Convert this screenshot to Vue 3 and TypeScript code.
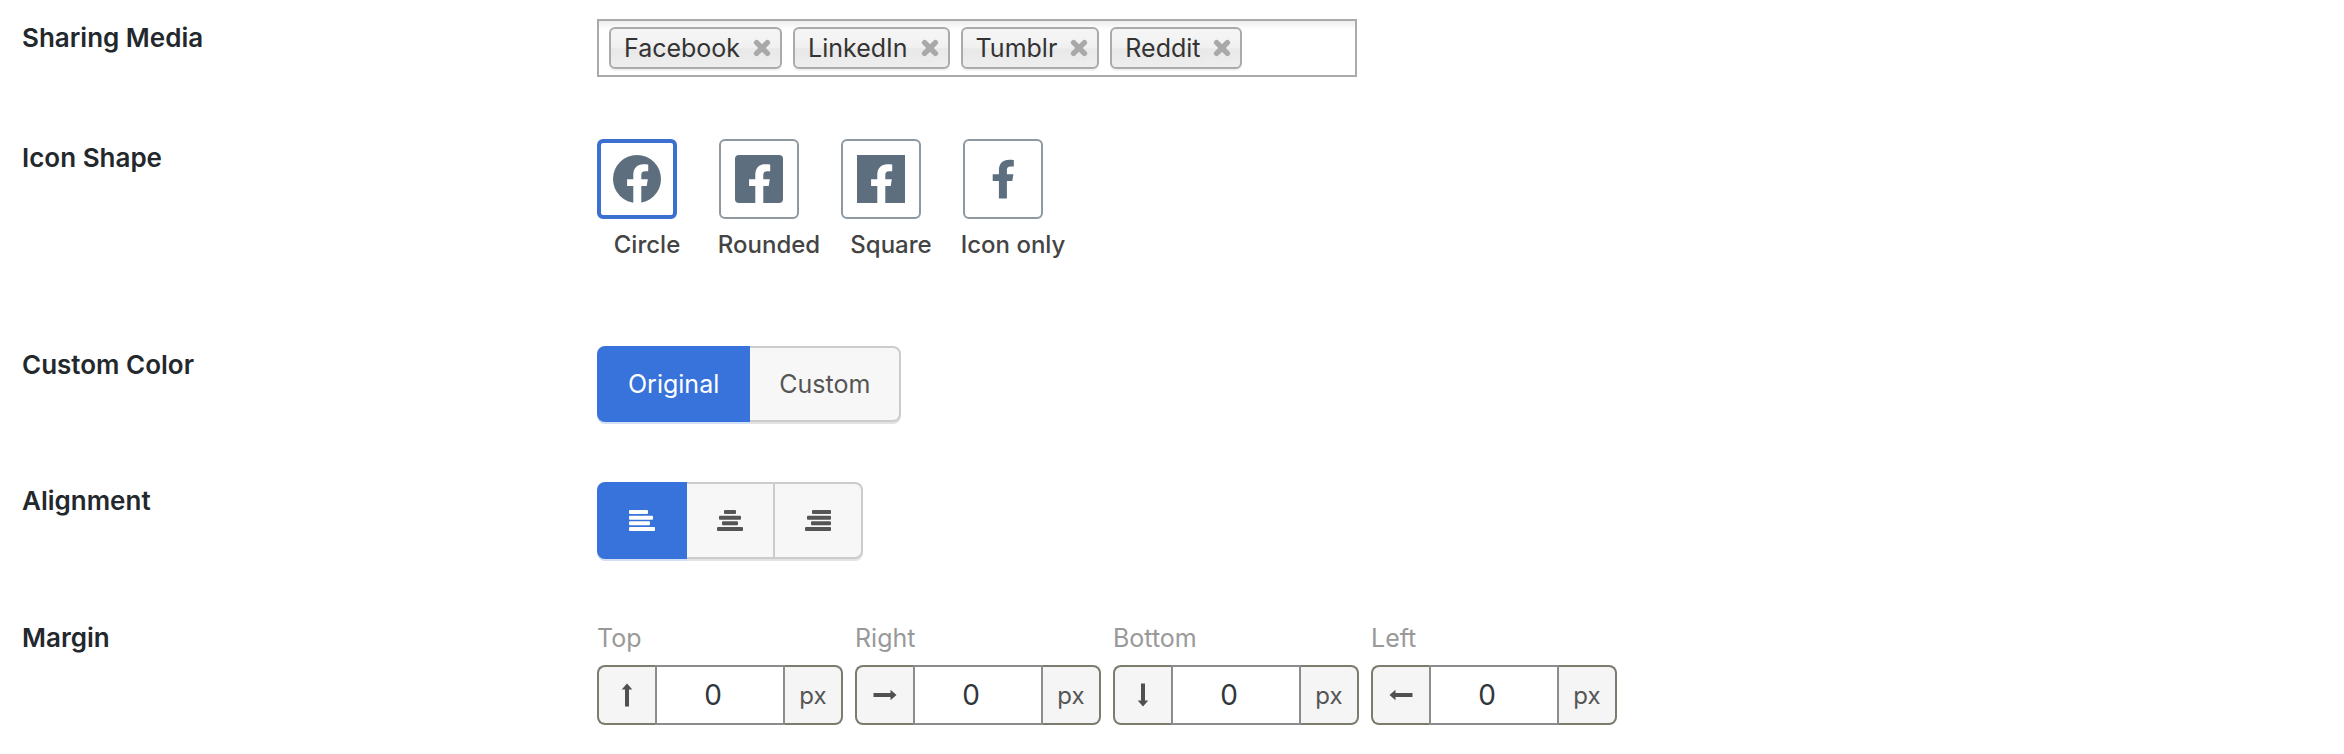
<script setup lang="ts">
import { ref } from 'vue'

type Bar = { x: number; w: number }

const media = ref<string[]>(['Facebook', 'LinkedIn', 'Tumblr', 'Reddit'])
const query = ref('')

const shapes = [
  { id: 'circle', label: 'Circle' },
  { id: 'rounded', label: 'Rounded' },
  { id: 'square', label: 'Square' },
  { id: 'icon', label: 'Icon only' },
]
const shape = ref('circle')

const colors = ['Original', 'Custom']
const color = ref('Original')

const alignments: { id: string; bars: Bar[] }[] = [
  { id: 'Left', bars: [{ x: 0, w: 19 }, { x: 0, w: 24 }, { x: 0, w: 21 }, { x: 0, w: 26 }] },
  { id: 'Center', bars: [{ x: 7, w: 12 }, { x: 2, w: 22 }, { x: 5, w: 16 }, { x: 0, w: 26 }] },
  { id: 'Right', bars: [{ x: 7, w: 19 }, { x: 2, w: 24 }, { x: 6, w: 20 }, { x: 0, w: 26 }] },
]
const alignment = ref('Left')

const margins = ref([
  { side: 'Top', angle: 0, value: '0' },
  { side: 'Right', angle: 90, value: '0' },
  { side: 'Bottom', angle: 180, value: '0' },
  { side: 'Left', angle: 270, value: '0' },
])

function removeMedia(name: string) {
  media.value = media.value.filter((m) => m !== name)
}
</script>

<template>
  <main class="settings">
    <section class="row">
      <label class="title" for="media-search">Sharing Media</label>
      <div class="chips">
        <span v-for="name in media" :key="name" class="chip">
          {{ name }}
          <button type="button" class="remove" :aria-label="`Remove ${name}`" @click="removeMedia(name)">
            <svg width="18" height="18" viewBox="0 0 18 18">
              <path d="M3.6 3.6L14.4 14.4M14.4 3.6L3.6 14.4" stroke="currentColor" stroke-width="5.4" stroke-linecap="round" />
            </svg>
          </button>
        </span>
        <input id="media-search" v-model="query" class="search" type="text" autocomplete="off" />
      </div>
    </section>

    <section class="row">
      <h2 id="shape-title" class="title">Icon Shape</h2>
      <div class="shapes" role="radiogroup" aria-labelledby="shape-title">
        <label v-for="s in shapes" :key="s.id" class="shape">
          <span class="tile">
            <input v-model="shape" type="radio" name="shape" :value="s.id" />
            <svg width="48" height="48" viewBox="0 0 48 48">
              <template v-if="s.id === 'icon'">
                <path fill="#5d6f7e" d="M19.9 43.4V26H13.7V19.2H19.9V15.4C19.9 8 24.2 4.7 30 4.7C32 4.7 34 4.9 34.8 5V11.6H31.8C28.8 11.6 27.9 13 27.9 15.2V19.2H34.4L33.3 26H27.9V43.4Z" />
              </template>
              <template v-else>
                <circle v-if="s.id === 'circle'" cx="24" cy="24" r="24" fill="#5d6f7e" />
                <rect v-else width="48" height="48" :rx="s.id === 'rounded' ? 4 : 0" fill="#5d6f7e" />
                <path fill="#fff" d="M20.3 48V31.1H14.1V24.3H20.3V20.2C20.3 12.8 24.5 9.3 30.4 9.3C32.4 9.3 34.4 9.5 35.2 9.6V16.2H32.2C29.2 16.2 28.3 17.8 28.3 20V24.3H34.8L33.7 31.1H28.3V48Z" />
              </template>
            </svg>
          </span>
          <span class="caption">{{ s.label }}</span>
        </label>
      </div>
    </section>

    <section class="row">
      <h2 id="color-title" class="title">Custom Color</h2>
      <div class="group" role="group" aria-labelledby="color-title">
        <button
          v-for="c in colors"
          :key="c"
          type="button"
          class="option"
          :class="{ active: color === c }"
          :aria-pressed="color === c"
          @click="color = c"
        >{{ c }}</button>
      </div>
    </section>

    <section class="row">
      <h2 id="align-title" class="title">Alignment</h2>
      <div class="group" role="group" aria-labelledby="align-title">
        <button
          v-for="a in alignments"
          :key="a.id"
          type="button"
          class="option icon"
          :class="{ active: alignment === a.id }"
          :aria-pressed="alignment === a.id"
          :aria-label="a.id"
          @click="alignment = a.id"
        >
          <svg width="26" height="21" viewBox="0 0 26 21" fill="currentColor">
            <rect v-for="(b, i) in a.bars" :key="i" :x="b.x" :y="i * 5.67" :width="b.w" height="4" rx="1" />
          </svg>
        </button>
      </div>
    </section>

    <section class="row">
      <h2 class="title">Margin</h2>
      <div class="margins">
        <div v-for="m in margins" :key="m.side" class="margin">
          <label class="side" :for="`margin-${m.side}`">{{ m.side }}</label>
          <div class="field">
            <span class="addon">
              <svg width="24" height="24" viewBox="0 0 24 24">
                <path :transform="`rotate(${m.angle} 12 12)`" fill="#50514f" d="M12 0.5L17.3 6.5H14V23.5H10V6.5H6.7Z" />
              </svg>
            </span>
            <input :id="`margin-${m.side}`" v-model="m.value" class="number" type="text" inputmode="numeric" />
            <span class="addon unit">px</span>
          </div>
        </div>
      </div>
    </section>
  </main>
</template>

<style>
body {
  margin: 0;
  background: #fff;
}
</style>

<style scoped>
.settings {
  display: flex;
  flex-direction: column;
  gap: 60px;
  padding: 19px 22px 27px;
  font-family: Inter, "Liberation Sans", sans-serif;
  font-size: 25px;
  color: #32373c;
}
.settings * {
  box-sizing: border-box;
}
button,
input {
  margin: 0;
  font: inherit;
  color: inherit;
}
button {
  cursor: pointer;
}
svg {
  display: block;
}
.row {
  display: grid;
  grid-template-columns: 575px minmax(0, 1fr);
  align-items: start;
  min-height: 60px;
}
.title {
  margin: 0;
  font-size: 26px;
  font-weight: 600;
  line-height: 38px;
  color: #23282d;
}

.chips {
  display: flex;
  gap: 11px;
  max-width: 760px;
  padding: 6px 10px;
  border: 2px solid #aaa;
  background: linear-gradient(#eee 1%, #fff 15%);
}
.chip {
  display: flex;
  align-items: center;
  gap: 13px;
  height: 42px;
  padding: 0 9px 0 13px;
  border: 2px solid #aaa;
  border-radius: 6px;
  background: linear-gradient(#f4f4f4 20%, #f0f0f0 50%, #e8e8e8 52%, #eee 100%);
  box-shadow: 0 2px 0 rgba(0, 0, 0, 0.05);
  color: #333;
}
.remove {
  padding: 0;
  border: 0;
  background: none;
  color: #a9a9a9;
}
.search {
  flex: 1;
  min-width: 0;
  padding: 0;
  border: 0;
  outline: 0;
  background: none;
}

.shapes {
  display: flex;
  flex-wrap: wrap;
  gap: 22px;
  padding-bottom: 23px;
}
.shape {
  display: flex;
  flex-direction: column;
  width: 100px;
}
.tile {
  display: grid;
  width: 80px;
  height: 80px;
  place-items: center;
}
.tile > * {
  grid-area: 1 / 1;
}
.tile input {
  width: 80px;
  height: 80px;
  appearance: none;
  border: 2px solid #8d98a1;
  border-radius: 6px;
}
.tile input:checked {
  border: 4px solid #3b6fd0;
}
.tile svg {
  pointer-events: none;
}
.caption {
  align-self: center;
  padding-top: 8px;
  font-size: 24px;
  font-weight: 500;
  line-height: 36px;
  white-space: nowrap;
  color: #444;
}

.group {
  display: flex;
}
.option {
  min-height: 76px;
  padding: 0 29px;
  border: 2px solid #ccc;
  border-left-width: 0;
  background: #f7f7f7;
  box-shadow: 0 2px 0 #e3e3e3;
  color: #555;
}
.option.icon {
  display: grid;
  place-items: center;
  width: 88px;
  min-height: 77px;
  padding: 0;
}
.option:first-child {
  border-left-width: 2px;
  border-radius: 8px 0 0 8px;
}
.option.icon:first-child {
  width: 90px;
}
.option:last-child {
  border-radius: 0 8px 8px 0;
}
.option.active {
  border-color: #3872db;
  background: #3872db;
  box-shadow: 0 2px 0 #d3dff5;
  color: #fff;
}

.margins {
  display: flex;
  flex-wrap: wrap;
  gap: 12px;
}
.margin {
  width: 246px;
}
.side {
  display: block;
  padding-bottom: 8px;
  line-height: 38px;
  color: #999;
}
.field {
  display: flex;
  height: 60px;
}
.addon {
  display: grid;
  flex: none;
  place-items: center;
  width: 58px;
  border: 2px solid #7c7b6e;
  border-right: 0;
  border-radius: 8px 0 0 8px;
  background: #f5f5f5;
}
.unit {
  border-right: 2px solid #7c7b6e;
  border-left: 0;
  border-radius: 0 8px 8px 0;
  font-size: 24px;
  color: #555;
}
.number {
  flex: 1;
  min-width: 0;
  padding: 0 14px 0 0;
  border: 2px solid #8c8c8c;
  border-radius: 0;
  background: #fff;
  font-size: 28px;
  text-align: center;
}
</style>
